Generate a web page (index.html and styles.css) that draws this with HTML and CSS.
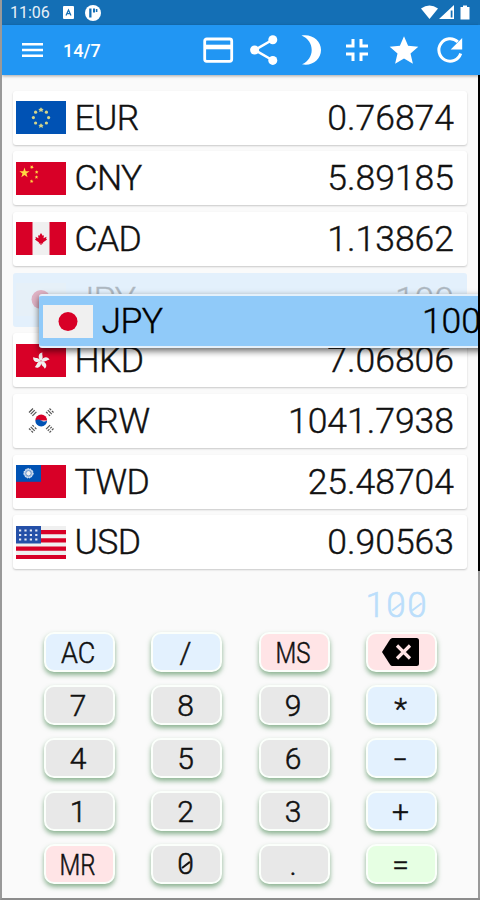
FILE: index.html
```
<!DOCTYPE html>
<html lang="en">
<head>
    <meta charset="UTF-8">
    <meta name="viewport" content="width=device-width, initial-scale=1.0">
    <title>Currency Converter</title>
    <link rel="stylesheet" href="styles.css">
</head>
<body>
    <div class="screen">
        <div class="status-bar">
            <span class="clock">11:06</span>
            <svg class="status-app" width="11" height="13" viewBox="0 0 11 13"><rect width="11" height="13" rx="1" fill="#fff"/><path d="M3 9.5 5.5 4 8 9.5M4 7.7h3" fill="none" stroke="#146fb5" stroke-width="1.2"/></svg>
            <svg class="status-dot" width="16" height="16" viewBox="0 0 16 16"><circle cx="8" cy="8" r="8" fill="#fff"/><path d="M4.2 3.5h2.3v9H4.2zM8 3.5h2v4H8zM10.8 4h1.6v3h-1.6z" fill="#146fb5"/></svg>
            <svg class="status-system" width="50" height="15" viewBox="0 0 50 15" fill="#fff"><path d="M0 3.5Q8.500-2.500 17 3.500L8.500 14z"/><path fill-rule="evenodd" d="M33 0v14H18zM31.500 5.500h-1.800v7h1.800z"/><path d="M42 2V.5h4V2h2.500v12.500h-9V2z"/></svg>
        </div>

        <div class="app-bar">
            <svg class="menu-icon" width="22" height="16" viewBox="0 0 22 16" fill="#fff"><path d="M0 1h21v2.400H0zM0 6.800h21v2.400H0zM0 12.600h21V15H0z"/></svg>
            <span class="counter">14/7</span>
            <div class="actions">
                <svg viewBox="0 0 32 32"><rect x="2.700" y="5" width="27" height="22.300" rx="2" fill="none" stroke="#fff" stroke-width="2.800"/><path d="M3 10.700h26v4.600H3z" fill="#fff"/></svg>
                <svg viewBox="0 0 32 32" fill="#fff"><path d="M25 5.500 7 16l18 10.500" fill="none" stroke="#fff" stroke-width="2.600"/><circle cx="24.800" cy="5.800" r="4.500"/><circle cx="6.600" cy="16" r="4.500"/><circle cx="24.800" cy="26.400" r="4.500"/></svg>
                <svg viewBox="0 0 32 32" fill="#fff"><path d="M6.500 1.500C17-.500 26 6.500 26 16S17 32.500 7 30.300C20 24.500 20 7 6.500 1.500z"/></svg>
                <svg viewBox="0 0 32 32" fill="none" stroke="#fff" stroke-width="3"><path d="M5 12h7V5M20 5v7h7M5 20h7v7M20 27v-7h7"/></svg>
                <svg viewBox="0 0 32 32" fill="#fff"><path d="m16 2.200 4.100 9.600 10.200.9-7.800 6.900 2.400 10.200L16 24.400l-8.900 5.400 2.400-10.200-7.800-6.900 10.200-.9z"/></svg>
                <svg viewBox="0 0 32 32"><path d="M23.800 7.900A11.200 11.200 0 1 0 26.700 19.500" fill="none" stroke="#fff" stroke-width="3"/><path d="M28.200 4v11.500H16.700z" fill="#fff"/></svg>
            </div>
        </div>

        <div class="currency-list">
            <div class="currency">
                <svg class="flag" viewBox="0 0 50 33"><rect width="50" height="33" fill="#0052b4"/><g fill="#d6d58a"><path d="m25 6.300 1 1.500 1.700.2-1.200 1.200.3 1.800-1.800-.8-1.800.8.300-1.800L22.300 8l1.700-.2zM25 22.200l1 1.500 1.700.2-1.200 1.200.3 1.800-1.800-.8-1.800.8.300-1.800-1.200-1.200 1.700-.2z"/><circle cx="19.600" cy="11.200" r="1.600"/><circle cx="30.400" cy="11.200" r="1.600"/><circle cx="17.400" cy="16.600" r="1.600"/><circle cx="32.600" cy="16.600" r="1.600"/><circle cx="19.600" cy="22" r="1.600"/><circle cx="30.400" cy="22" r="1.600"/></g></svg>
                <span class="code">EUR</span>
                <span class="amount">0.76874</span>
            </div>
            <div class="currency">
                <svg class="flag" viewBox="0 0 50 33"><rect width="50" height="33" fill="#d80027"/><g fill="#ffda44"><path d="m8.500 5.500 1.200 3.700h3.900l-3.200 2.300 1.200 3.700-3.100-2.300-3.200 2.300 1.200-3.700-3.100-2.300h3.900z"/><path d="m14.500 3.500 1.200.6 1.200-.7-.2 1.400 1.100.9-1.400.3-.4 1.300-.7-1.200-1.400.1.900-1zM20.500 8.200l.6 1.100 1.300-.1-.9 1 .5 1.300-1.300-.6-1.100.9.200-1.400-1.100-.8 1.400-.2zM20.400 13.300l.5 1.300h1.400l-1.100.8.400 1.400-1.200-.8-1.100.8.400-1.400-1.100-.8h1.300zM16 17.300l.3 1.400 1.300.4-1.200.6v1.400l-1-.9-1.300.4.600-1.300-.8-1.100 1.400.2z"/></g></svg>
                <span class="code">CNY</span>
                <span class="amount">5.89185</span>
            </div>
            <div class="currency">
                <svg class="flag" viewBox="0 0 50 33"><rect width="50" height="33" fill="#f0f0f0"/><path d="M0 0h16.500v33H0zM33.500 0H50v33H33.500z" fill="#d80027"/><path d="m25 11 1.700 2.700 1.300-.5-.5 3 3-1.500-.4 2 1 .8-4.100 3 .2 1h-1.700V23h-1v-1.500h-1.700l.2-1-4.100-3 1-.8-.4-2 3 1.500-.5-3 1.300.5z" fill="#d80027"/></svg>
                <span class="code">CAD</span>
                <span class="amount">1.13862</span>
            </div>
            <div class="currency placeholder">
                <svg class="flag" viewBox="0 0 50 33"><rect width="50" height="33" fill="#f0f0f0"/><circle cx="25" cy="16.500" r="9.500" fill="#d80027"/></svg>
                <span class="code">JPY</span>
                <span class="amount">100</span>
            </div>
            <div class="currency">
                <svg class="flag" viewBox="0 0 50 33"><rect width="50" height="33" fill="#d80027"/><g fill="#f0f0f0" transform="translate(25 17)"><path id="petal" d="M-.5-.5C-4-4-2-8.500 1.500-8.500.500-6 3-4 .5-.5z"/><use href="#petal" transform="rotate(72)"/><use href="#petal" transform="rotate(144)"/><use href="#petal" transform="rotate(216)"/><use href="#petal" transform="rotate(288)"/></g></svg>
                <span class="code">HKD</span>
                <span class="amount">7.06806</span>
            </div>
            <div class="currency">
                <svg class="flag" viewBox="0 0 50 33"><rect width="50" height="33" fill="#fff"/><path d="M19.300 16.500a5.900 5.900 0 0 1 11.800 0z" fill="#d80027"/><path d="M19.300 16.500a5.900 5.900 0 0 0 11.800 0c-2.500 1.800-4.500.8-5.900 0s-3.900-1.800-5.900 0z" fill="#0052b4"/><g fill="none" stroke="#555" stroke-width="1.200"><path d="m13 8.500 4-4M14.700 10.200l4-4M16.400 11.900l4-4M33.500 4.500l1.600 1.600m.8.800 1.600 1.600M31.800 6.200l4 4M30.100 7.900l1.600 1.600m.8.800 1.600 1.600M13 24.500l1.600 1.600m.8.800 1.600 1.600M14.700 22.800l4 4M16.400 21.100l1.600 1.600m.8.800 1.600 1.600M33.500 28.500l1.600-1.600m.8-.8 1.600-1.600M31.800 26.800l1.600-1.600m.8-.8 1.600-1.600M30.100 25.100l4-4"/></g></svg>
                <span class="code">KRW</span>
                <span class="amount">1041.7938</span>
            </div>
            <div class="currency">
                <svg class="flag" viewBox="0 0 50 33"><rect width="50" height="33" fill="#d80027"/><rect width="25" height="16.800" fill="#0052b4"/><circle cx="12.500" cy="8.300" r="4.600" fill="#b5c9e6" stroke="#fff" stroke-dasharray="1.500 1"/><circle cx="12.500" cy="8.300" r="2.700" fill="#f0f0f0" stroke="#4c80c3" stroke-width=".8"/></svg>
                <span class="code">TWD</span>
                <span class="amount">25.48704</span>
            </div>
            <div class="currency">
                <svg class="flag" viewBox="0 0 50 33"><rect width="50" height="33" fill="#f0f0f0"/><path d="M0 4h50v4.200H0zM0 12.300h50v4.200H0zM0 20.600h50v4.200H0zM0 28.900h50V33H0z" fill="#d80027"/><rect width="25" height="17.500" fill="#2450a8"/><path d="M3 4.500h20M3 9h20M3 13.500h20" stroke="#e4e9f4" stroke-width="2.200" stroke-dasharray="2.200 3.200"/></svg>
                <span class="code">USD</span>
                <span class="amount">0.90563</span>
            </div>

            <!-- row being dragged -->
            <div class="currency dragged">
                <svg class="flag" viewBox="0 0 50 33"><rect width="50" height="33" fill="#f0f0f0"/><circle cx="25" cy="16.500" r="9.500" fill="#d80027"/></svg>
                <span class="code">JPY</span>
                <span class="amount">100</span>
            </div>
        </div>

        <div class="calculator">
            <div class="display">1<span class="zero">0</span><span class="zero">0</span></div>
            <div class="keypad">
                <button class="key blue"><span class="narrow">AC</span></button>
                <button class="key blue">/</button>
                <button class="key red"><span class="narrower">MS</span></button>
                <button class="key red" aria-label="Backspace"><svg width="37" height="28" viewBox="0 0 37 28"><path d="M10.500 0h24Q37 0 37 2.500v23Q37 28 34.500 28h-24Q9 28 8 26.500L0 14 8 1.500Q9 0 10.500 0z"/><path d="m15 7.500 13 13m0-13-13 13" stroke="#ffe4e6" stroke-width="3.200"/></svg></button>
                <button class="key">7</button>
                <button class="key">8</button>
                <button class="key">9</button>
                <button class="key blue"><span class="star">*</span></button>
                <button class="key">4</button>
                <button class="key">5</button>
                <button class="key">6</button>
                <button class="key blue"><span class="wide">-</span></button>
                <button class="key">1</button>
                <button class="key">2</button>
                <button class="key">3</button>
                <button class="key blue">+</button>
                <button class="key red"><span class="narrower">MR</span></button>
                <button class="key"><span class="zero">0</span></button>
                <button class="key">.</button>
                <button class="key green">=</button>
            </div>
        </div>
    </div>
</body>
</html>
```
FILE: styles.css
```
* {
    box-sizing: border-box;
}
body {
    margin: 0;
    font-family: Roboto, "Liberation Sans", sans-serif;
    color: #111;
}
.screen {
    display: flex;
    flex-direction: column;
    width: 480px;
    height: 900px;
    overflow: hidden;
    position: relative;
    background-color: #fafafa;
    border-left: 2px solid #999;
    border-bottom: 2px solid #8c8c8c;
}
/* right window edge */
.screen::after {
    content: "";
    position: absolute;
    top: 0;
    right: 0;
    width: 2px;
    height: 100%;
    background: linear-gradient(#146fb5 25px, #2196f3 25px, #2196f3 75px, #000 75px, #000 571px, #999 571px);
}
.status-bar {
    display: flex;
    align-items: center;
    height: 25px;
    padding: 0 9px 0 8px;
    background-color: #146fb5;
    color: #e6f0f8;
}
.clock {
    width: 53px;
    font-size: 16px;
    line-height: 25px;
}
.status-dot {
    margin-left: 11px;
}
.status-system {
    margin-left: auto;
}
.app-bar {
    display: flex;
    align-items: center;
    flex-shrink: 0;
    height: 50px;
    padding: 0 14px 0 20px;
    background-color: #2196f3;
    color: #fff;
    box-shadow: 0 1px 3px rgba(0, 0, 0, 0.35);
}
.counter {
    margin-left: 19px;
    font-size: 18px;
    font-weight: 500;
}
.actions {
    display: flex;
    gap: 14.4px;
    margin-left: auto;
}
.actions svg {
    width: 32px;
    height: 32px;
}
.currency-list {
    display: flex;
    flex-direction: column;
    gap: 6.7px;
    position: relative;
    padding: 15.5px 13px 0 11px;
}
.currency {
    display: flex;
    align-items: center;
    height: 54px;
    padding: 0 13px 0 3px;
    background-color: #fff;
    border-radius: 3px;
    box-shadow: 0 1px 2px rgba(0, 0, 0, 0.2);
    font-size: 35.5px;
    font-weight: 300;
    -webkit-text-stroke: 0.4px currentColor;
}
.flag {
    flex-shrink: 0;
    width: 50px;
    height: 33px;
}
.code {
    margin-left: 8.5px;
    letter-spacing: -0.6px;
}
.amount {
    margin-left: auto;
}
.placeholder {
    background-color: #e3f0fc;
    box-shadow: none;
}
.placeholder > * {
    opacity: 0.25;
}
.dragged {
    position: absolute;
    top: 219px;
    left: 37px;
    width: 455px;
    padding-left: 4px;
    background-color: #90caf9;
    border-top: 2px solid #e4f0fa;
    border-bottom: 2px solid #e4f0fa;
    box-shadow: 0 3px 7px rgba(0, 0, 0, 0.6);
    color: #000;
}
.calculator {
    flex: 1;
    padding: 15px 43px 0 41.5px;
}
.display {
    height: 43px;
    padding-right: 9px;
    font-size: 35px;
    font-weight: 300;
    line-height: 43px;
    letter-spacing: 1.4px;
    text-align: right;
    color: #bbdefb;
    -webkit-text-stroke: 0.6px currentColor;
}
.keypad {
    display: grid;
    grid-template-columns: repeat(4, 71px);
    justify-content: space-between;
    row-gap: 13px;
    margin-top: 5px;
}
.key {
    display: flex;
    align-items: center;
    justify-content: center;
    height: 40px;
    padding: 0 2px 0 0;
    background-color: #e8e8e8;
    border: 2px solid #fbfffb;
    border-radius: 10px;
    box-shadow: 0 3px 5px rgba(50, 120, 60, 0.55);
    font-family: Roboto, "Liberation Sans", sans-serif;
    font-size: 30px;
    font-weight: 300;
    color: #111;
    -webkit-text-stroke: 0.5px currentColor;
}
.blue {
    background-color: #e3f1fe;
}
.red {
    background-color: #ffe4e6;
}
.green {
    background-color: #e6ffe3;
}
.narrow {
    transform: scaleX(0.9);
}
.narrower {
    transform: scaleX(0.8);
}
.wide {
    transform: scaleX(1.5);
}
.star {
    padding-top: 6px;
}
/* slashed zero */
.zero {
    display: inline-block;
    position: relative;
    line-height: 1;
}
.zero::after {
    content: "";
    position: absolute;
    top: 50%;
    left: 0.12em;
    width: 0.33em;
    height: 2px;
    background-color: currentColor;
    transform: rotate(-38deg);
}
```
